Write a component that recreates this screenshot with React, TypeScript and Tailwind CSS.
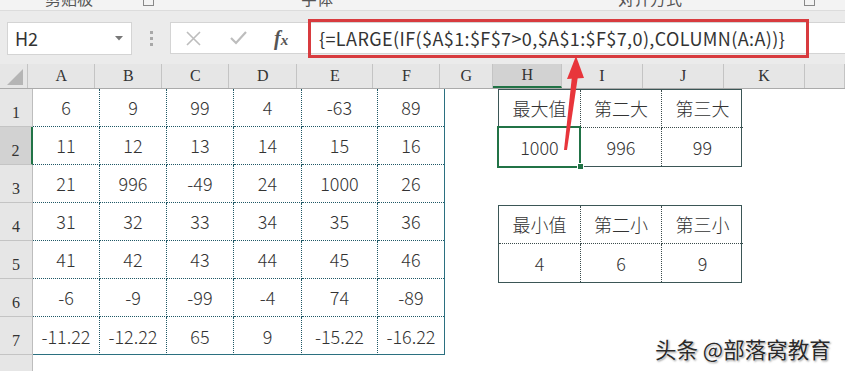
import React from "react";

const data = [
  ["6", "9", "99", "4", "-63", "89"],
  ["11", "12", "13", "14", "15", "16"],
  ["21", "996", "-49", "24", "1000", "26"],
  ["31", "32", "33", "34", "35", "36"],
  ["41", "42", "43", "44", "45", "46"],
  ["-6", "-9", "-99", "-4", "74", "-89"],
  ["-11.22", "-12.22", "65", "9", "-15.22", "-16.22"],
];

const cols = [
  { name: "A", w: "w-[67px]" },
  { name: "B", w: "w-[67px]" },
  { name: "C", w: "w-[67px]" },
  { name: "D", w: "w-[68px]" },
  { name: "E", w: "w-[76px]" },
  { name: "F", w: "w-[67px]" },
  { name: "G", w: "w-[53px]" },
  { name: "H", w: "w-[82px]" },
  { name: "I", w: "w-[81px]" },
  { name: "J", w: "w-[81px]" },
  { name: "K", w: "w-[81px]" },
  { name: "", w: "w-[40px]" },
];

const cellFont = { fontFamily: '"Noto Sans CJK SC", "Noto Sans", sans-serif' };
const serif = { fontFamily: '"Liberation Serif", "DejaVu Serif", serif' };

function MiniTable({
  head,
  values,
  selected,
}: {
  head: string[];
  values: string[];
  selected?: boolean;
}) {
  return (
    <div
      className="grid grid-cols-[82px_81px_81px] grid-rows-[38px_38px] border border-[#3b5656] w-[244px] text-[18px] text-[#333] font-light"
      style={cellFont}
    >
      {head.map((h, i) => (
        <div
          key={h}
          className={
            i < 2
              ? "flex items-center justify-center border-r border-b border-dotted border-[#3b4b4b]"
              : "flex items-center justify-center border-b border-dotted border-[#3b4b4b]"
          }
        >
          {h}
        </div>
      ))}
      {values.map((v, i) => (
        <div
          key={i}
          className={
            i < 2
              ? "relative flex items-center justify-center border-r border-dotted border-[#3b4b4b]"
              : "relative flex items-center justify-center"
          }
        >
          {v}
          {selected && i === 0 && (
            <>
              <div className="absolute -left-[2px] -top-[2px] -right-[1px] -bottom-[2px] border-2 border-[#217346]" />
              <div className="absolute -right-[4px] -bottom-[4px] w-[7px] h-[7px] bg-[#217346] border border-white" />
            </>
          )}
        </div>
      ))}
    </div>
  );
}

export default function App() {
  return (
    <div className="relative w-[845px] h-[371px] overflow-hidden bg-white select-none">
      {/* ribbon remnant */}
      <div
        className="relative h-[11px] bg-[#f3f3f3] border-b border-[#dcdcdc] overflow-hidden text-[16px] text-[#555]"
        style={cellFont}
      >
        <div className="flex items-start -mt-[13px] leading-[22px]">
          <span className="ml-[45px]">剪贴板</span>
          <span className="ml-[50px] mt-[8px] w-[11px] h-[11px] border border-[#888]" />
          <span className="ml-[147px]">字体</span>
          <span className="ml-[285px]">对齐方式</span>
          <span className="ml-[122px] mt-[8px] w-[11px] h-[11px] border border-[#888]" />
        </div>
      </div>

      {/* formula bar */}
      <div className="h-[53px] bg-[#ebebeb] flex items-start pt-[11px]">
        <div className="ml-[7px] w-[125px] h-[33px] bg-white border border-[#d4d4d4] flex items-center justify-between pl-[7px] pr-[8px]">
          <span className="text-[18px] text-[#333]" style={cellFont}>
            H2
          </span>
          <svg width="8" height="5" viewBox="0 0 8 5">
            <path d="M0 0 L8 0 L4 4.5 Z" fill="#777" />
          </svg>
        </div>
        <div className="w-[38px] h-[33px] flex flex-col items-center justify-center gap-[3px]">
          <span className="w-[3px] h-[3px] bg-[#a8a8a8]" />
          <span className="w-[3px] h-[3px] bg-[#a8a8a8]" />
          <span className="w-[3px] h-[3px] bg-[#a8a8a8]" />
        </div>
        <div className="flex-1 h-[32px] bg-white border border-[#d4d4d4] border-r-0 flex items-center">
          <div className="w-[136px] flex items-center">
            <svg className="ml-[15px]" width="15" height="15" viewBox="0 0 15 15">
              <path d="M1 1 L14 14 M14 1 L1 14" stroke="#bdbdbd" strokeWidth="1.6" />
            </svg>
            <svg className="ml-[29px]" width="17" height="14" viewBox="0 0 17 14">
              <path d="M1 7 L6 12 L16 1" stroke="#bdbdbd" strokeWidth="2.2" fill="none" />
            </svg>
            <span
              className="ml-[27px] text-[20px] italic font-bold text-[#555] leading-none"
              style={{ fontFamily: '"Liberation Serif", serif' }}
            >
              f<span className="text-[15px]">x</span>
            </span>
          </div>
          <div className="relative ml-[4px] h-full flex items-center">
            <div className="absolute left-[-3px] top-[-4px] w-[501px] h-[39px] border-[3px] border-[#d83b3f]" />
            <span
              className="pl-[8px] text-[18px] tracking-[0.4px] text-[#333] whitespace-nowrap"
              style={cellFont}
            >
              {"{=LARGE(IF($A$1:$F$7>0,$A$1:$F$7,0),COLUMN(A:A))}"}
            </span>
          </div>
        </div>
      </div>

      {/* column headers */}
      <div className="flex h-[25px] bg-[#e6e6e6] border-b border-[#ababab] text-[16px] text-[#333]" style={serif}>
        <div className="w-[33px] h-full border-r border-[#c4c4c4] flex items-end justify-end pr-[4px] pb-[3px]">
          <svg width="16" height="16" viewBox="0 0 16 16">
            <path d="M16 0 L16 16 L0 16 Z" fill="#b5b5b5" />
          </svg>
        </div>
        {cols.map((c) =>
          c.name === "H" ? (
            <div
              key={c.name}
              className={`${c.w} h-full bg-[#d2d2d2] border-r border-[#c4c4c4] border-b-2 border-b-[#217346] flex items-center justify-center`}
            >
              {c.name}
            </div>
          ) : (
            <div
              key={c.name || "x"}
              className={`${c.w} shrink-0 h-full border-r border-[#c4c4c4] flex items-center justify-center`}
            >
              {c.name}
            </div>
          )
        )}
      </div>

      {/* sheet body */}
      <div className="flex">
        <div className="w-[33px] shrink-0 text-[16px] text-[#333]" style={serif}>
          {[1, 2, 3, 4, 5, 6, 7, 8].map((n) =>
            n === 2 ? (
              <div
                key={n}
                className="h-[38px] bg-[#d2d2d2] border-b border-[#c4c4c4] border-r-2 border-r-[#217346] flex items-end justify-center pb-[1px]"
              >
                {n}
              </div>
            ) : (
              <div
                key={n}
                className="h-[38px] bg-[#e6e6e6] border-b border-[#c4c4c4] border-r border-r-[#bdbdbd] flex items-end justify-center pb-[1px]"
              >
                {n}
              </div>
            )
          )}
        </div>

        <div
          className="grid grid-cols-[67px_67px_67px_68px_76px_66px] grid-rows-[repeat(7,38px)] h-[266px] border-r border-b border-[#2b7080] text-[18px] text-[#333] font-light"
          style={cellFont}
        >
          {data.map((row, r) =>
            row.map((v, c) => (
              <div
                key={`${r}-${c}`}
                className={
                  r < 6 && c < 5
                    ? "flex items-center justify-center border-r border-b border-dotted border-[#1f5866]"
                    : r < 6
                    ? "flex items-center justify-center border-b border-dotted border-[#1f5866]"
                    : c < 5
                    ? "flex items-center justify-center border-r border-dotted border-[#1f5866]"
                    : "flex items-center justify-center"
                }
              >
                {v}
              </div>
            ))
          )}
        </div>

        <div className="w-[53px] shrink-0" />

        <div className="flex flex-col gap-[38px]">
          <MiniTable head={["最大值", "第二大", "第三大"]} values={["1000", "996", "99"]} selected />
          <MiniTable head={["最小值", "第二小", "第三小"]} values={["4", "6", "9"]} />
        </div>
      </div>

      {/* red arrow annotation */}
      <svg className="absolute left-0 top-0 pointer-events-none" width="845" height="371" viewBox="0 0 845 371">
        <polygon points="564,150 567,150 578,76 572,76" fill="#e8353b" />
        <polygon points="576,56 567,79 584,78" fill="#e8353b" />
      </svg>

      {/* watermark */}
      <div
        className="absolute left-[655px] top-[333px] text-[21.5px] text-[#2a2a2a] whitespace-nowrap [text-shadow:0_0_2px_#fff,0_0_2px_#fff,1px_1px_2px_#777]"
        style={cellFont}
      >
        头条 @部落窝教育
      </div>
    </div>
  );
}
